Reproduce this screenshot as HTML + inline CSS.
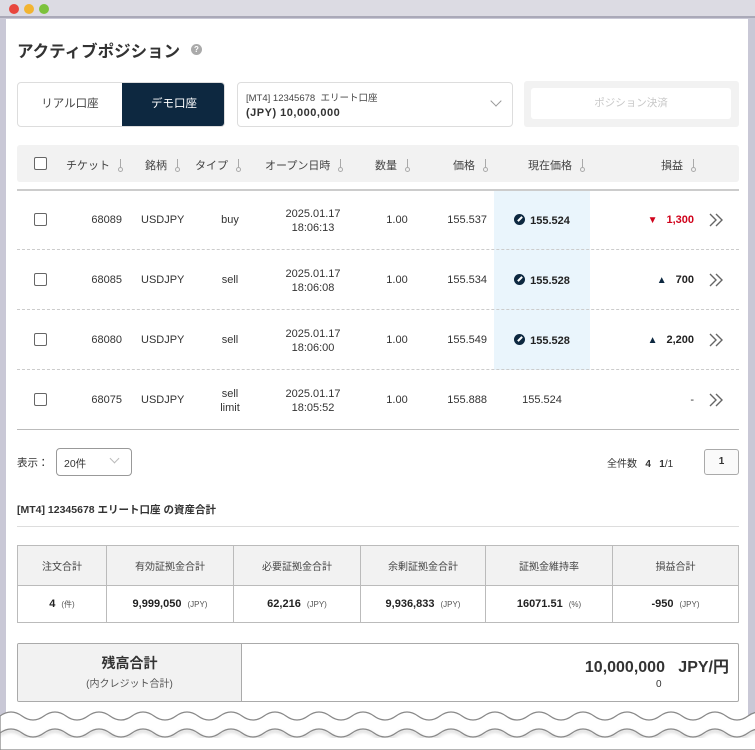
<!DOCTYPE html>
<html><head><meta charset="utf-8"><style>
*{box-sizing:border-box;margin:0;padding:0}
body{width:755px;height:750px;background:#fff;font-family:"Liberation Sans","Noto Sans CJK JP",sans-serif;color:#333;position:relative;overflow:hidden;font-size:11px}
.a{position:absolute}
.frame{left:0;top:0;width:755px;height:720px;background:#c9c8d6}
.top{left:0;top:0;width:755px;height:18px;background:#dcdbe3;border-bottom:2px solid #aaa9b8}
.dot{width:10px;height:10px;border-radius:50%;top:4px}
.page{left:6px;top:19px;width:742px;height:720px;background:#fff}
.c{text-align:center}
.r{text-align:right}
.cb{width:13px;height:13px;border:1px solid #666;border-radius:2px;background:#fff}
.sort{display:inline-block;width:5px;height:12px;position:relative;margin-left:8px;vertical-align:-2px}
.sort:before{content:"";position:absolute;left:2px;top:0;width:1px;height:9px;background:#aaa}
.sort:after{content:"";position:absolute;left:0;top:8px;width:3px;height:3px;border:1px solid #aaa;border-radius:50%}
.row{left:17px;width:722px;height:60px;border-bottom:1px dashed #ccc}
.ico{display:inline-block;width:11px;height:11px;border-radius:50%;background:#0d2840;vertical-align:-1px;margin-right:5px;position:relative}
.ico:after{content:"";position:absolute;left:3px;top:4px;width:6px;height:2px;background:#fff;transform:rotate(-45deg)}
.tri{font-size:10px;margin-right:9px}
table{border-collapse:collapse}
.sum td{border:1px solid #bbb;text-align:center;font-size:10px}
.sum tr:first-child td{background:#f2f2f2;height:40px;color:#444}
.sum tr:last-child td{height:37px}
.sum b{font-size:11px;color:#222;margin-right:6px}
.sum small{font-size:8px;color:#555}
</style></head><body>
<div class="a frame"></div>
<div class="a top"></div>
<div class="a dot" style="left:9px;background:#e8463e"></div>
<div class="a dot" style="left:24px;background:#f2b431"></div>
<div class="a dot" style="left:39px;background:#7cc23c"></div>
<div class="a page"></div>

<div class="a" style="left:17px;top:38px;font-size:16.5px;font-weight:bold;color:#333">アクティブポジション</div>
<div class="a" style="left:191px;top:44px;width:11px;height:11px;border-radius:50%;background:#aaa;color:#fff;font-size:8px;font-weight:bold;text-align:center;line-height:11px">?</div>

<div class="a" style="left:17px;top:82px;width:208px;height:45px;border:1px solid #ddd;border-radius:4px;overflow:hidden">
 <div class="a c" style="left:0;top:0;width:104px;height:43px;line-height:43px;font-size:11.5px;color:#444">リアル口座</div>
 <div class="a c" style="left:104px;top:0;width:104px;height:43px;line-height:43px;font-size:11.5px;color:#fff;background:#0d2840">デモ口座</div>
</div>
<div class="a" style="left:237px;top:82px;width:276px;height:45px;border:1px solid #ddd;border-radius:4px">
 <div class="a" style="left:8px;top:7px;font-size:9.5px;color:#444">[MT4] 12345678&nbsp; エリート口座</div>
 <div class="a" style="left:8px;top:24px;font-size:11px;font-weight:bold;color:#333;letter-spacing:.5px">(JPY) 10,000,000</div>
 <div class="a" style="left:254px;top:14px;width:8px;height:8px;border-right:1px solid #999;border-bottom:1px solid #999;transform:rotate(45deg)"></div>
</div>
<div class="a" style="left:524px;top:81px;width:215px;height:46px;background:#f2f2f2;border-radius:3px"></div>
<div class="a c" style="left:531px;top:88px;width:200px;height:31px;background:#fff;border-radius:3px;line-height:31px;color:#c8c8c8;font-size:10.5px">ポジション決済</div>

<div class="a" style="left:17px;top:145px;width:722px;height:37px;background:#f2f2f2;border-radius:3px"></div>
<div class="a" style="left:17px;top:189px;width:722px;height:2px;background:#ccc"></div>
<div class="a cb" style="left:34px;top:157px"></div>
<div class="a" style="left:66px;top:157px;color:#444">チケット<span class="sort"></span></div>
<div class="a" style="left:145px;top:157px;color:#444">銘柄<span class="sort"></span></div>
<div class="a" style="left:195px;top:157px;color:#444">タイプ<span class="sort"></span></div>
<div class="a" style="left:265px;top:157px;color:#444">オープン日時<span class="sort"></span></div>
<div class="a" style="left:375px;top:157px;color:#444">数量<span class="sort"></span></div>
<div class="a" style="left:453px;top:157px;color:#444">価格<span class="sort"></span></div>
<div class="a" style="left:528px;top:157px;color:#444">現在価格<span class="sort"></span></div>
<div class="a" style="left:661px;top:157px;color:#444">損益<span class="sort"></span></div>

<div class="a" style="left:494px;top:191px;width:96px;height:179px;background:#eaf5fc"></div>

<div class="a row" style="top:190px"></div>
<div class="a row" style="top:250px"></div>
<div class="a row" style="top:310px"></div>
<div class="a row" style="top:370px;border-bottom:1px solid #bbb"></div>

<div class="a cb" style="left:34px;top:213px"></div>
<div class="a r" style="left:72px;width:50px;top:214px">68089</div>
<div class="a" style="left:141px;top:214px">USDJPY</div>
<div class="a c" style="left:205px;width:50px;top:214px">buy</div>
<div class="a c" style="left:273px;width:80px;top:207px;line-height:14px">2025.01.17<br>18:06:13</div>
<div class="a c" style="left:377px;width:40px;top:214px">1.00</div>
<div class="a r" style="left:420px;width:67px;top:214px">155.537</div>
<div class="a c" style="left:494px;width:96px;top:214px;font-weight:bold;color:#222"><span class="ico"></span>155.524</div>
<div class="a r" style="left:620px;width:74px;top:214px;font-weight:bold;color:#d0021b"><span class="tri">▼</span>1,300</div>

<div class="a cb" style="left:34px;top:273px"></div>
<div class="a r" style="left:72px;width:50px;top:274px">68085</div>
<div class="a" style="left:141px;top:274px">USDJPY</div>
<div class="a c" style="left:205px;width:50px;top:274px">sell</div>
<div class="a c" style="left:273px;width:80px;top:267px;line-height:14px">2025.01.17<br>18:06:08</div>
<div class="a c" style="left:377px;width:40px;top:274px">1.00</div>
<div class="a r" style="left:420px;width:67px;top:274px">155.534</div>
<div class="a c" style="left:494px;width:96px;top:274px;font-weight:bold;color:#222"><span class="ico"></span>155.528</div>
<div class="a r" style="left:620px;width:74px;top:274px;font-weight:bold;color:#222"><span class="tri" style="color:#0d2840">▲</span>700</div>

<div class="a cb" style="left:34px;top:333px"></div>
<div class="a r" style="left:72px;width:50px;top:334px">68080</div>
<div class="a" style="left:141px;top:334px">USDJPY</div>
<div class="a c" style="left:205px;width:50px;top:334px">sell</div>
<div class="a c" style="left:273px;width:80px;top:327px;line-height:14px">2025.01.17<br>18:06:00</div>
<div class="a c" style="left:377px;width:40px;top:334px">1.00</div>
<div class="a r" style="left:420px;width:67px;top:334px">155.549</div>
<div class="a c" style="left:494px;width:96px;top:334px;font-weight:bold;color:#222"><span class="ico"></span>155.528</div>
<div class="a r" style="left:620px;width:74px;top:334px;font-weight:bold;color:#222"><span class="tri" style="color:#0d2840">▲</span>2,200</div>

<div class="a cb" style="left:34px;top:393px"></div>
<div class="a r" style="left:72px;width:50px;top:394px">68075</div>
<div class="a" style="left:141px;top:394px">USDJPY</div>
<div class="a c" style="left:205px;width:50px;top:387px;line-height:14px">sell<br>limit</div>
<div class="a c" style="left:273px;width:80px;top:387px;line-height:14px">2025.01.17<br>18:05:52</div>
<div class="a c" style="left:377px;width:40px;top:394px">1.00</div>
<div class="a r" style="left:420px;width:67px;top:394px">155.888</div>
<div class="a c" style="left:494px;width:96px;top:394px">155.524</div>
<div class="a r" style="left:620px;width:74px;top:394px">-</div>

<svg class="a" style="left:709px;top:213px" width="16" height="242" viewBox="0 0 16 242" fill="none" stroke="#666" stroke-width="1.4">
 <path d="M1 1 L7 7 L1 13 M7 1 L13 7 L7 13"/>
 <path d="M1 61 L7 67 L1 73 M7 61 L13 67 L7 73"/>
 <path d="M1 121 L7 127 L1 133 M7 121 L13 127 L7 133"/>
 <path d="M1 181 L7 187 L1 193 M7 181 L13 187 L7 193"/>
</svg>

<div class="a" style="left:17px;top:455px;font-size:10.5px">表示：</div>
<div class="a" style="left:56px;top:448px;width:76px;height:28px;border:1px solid #999;border-radius:4px">
 <div class="a" style="left:7px;top:7px;font-size:10.5px">20件</div>
 <div class="a" style="left:54px;top:6px;width:7px;height:7px;border-right:1px solid #bbb;border-bottom:1px solid #bbb;transform:rotate(45deg)"></div>
</div>
<div class="a" style="left:607px;top:455px;font-size:10px">全件数 &nbsp; <b>4</b> &nbsp; <b>1</b>/1</div>
<div class="a c" style="left:704px;top:449px;width:35px;height:26px;border:1px solid #aaa;border-radius:3px;background:#fafafa;line-height:24px;font-weight:bold;font-size:10px">1</div>

<div class="a" style="left:17px;top:502px;font-size:10.5px;font-weight:bold;color:#333">[MT4] 12345678 エリート口座 の資産合計</div>
<div class="a" style="left:17px;top:526px;width:722px;height:1px;background:#ddd"></div>

<table class="a sum" style="left:17px;top:545px;width:722px">
<tr><td style="width:89px">注文合計</td><td style="width:127px">有効証拠金合計</td><td style="width:127px">必要証拠金合計</td><td style="width:125px">余剰証拠金合計</td><td style="width:127px">証拠金維持率</td><td>損益合計</td></tr>
<tr><td><b>4</b><small>(件)</small></td><td><b>9,999,050</b><small>(JPY)</small></td><td><b>62,216</b><small>(JPY)</small></td><td><b>9,936,833</b><small>(JPY)</small></td><td><b>16071.51</b><small>(%)</small></td><td><b>-950</b><small>(JPY)</small></td></tr>
</table>

<div class="a" style="left:17px;top:643px;width:722px;height:59px;border:1px solid #aaa;border-radius:2px;overflow:hidden">
 <div class="a c" style="left:0;top:0;width:224px;height:57px;background:#f2f2f2;border-right:1px solid #aaa">
  <div style="margin-top:9px;font-size:14px;font-weight:bold">残高合計</div>
  <div style="font-size:10px;color:#555;margin-top:2px">(内クレジット合計)</div>
 </div>
 <div class="a r" style="right:9px;top:9px;font-size:16px;font-weight:bold;color:#333">10,000,000 &nbsp;&nbsp;JPY/円</div>
 <div class="a" style="left:638px;top:35px;font-size:10px">0</div>
</div>

<svg class="a" style="left:0;top:706px" width="755" height="44" viewBox="0 0 755 44">
 <defs><filter id="s"><feDropShadow dx="0" dy="2" stdDeviation="1.5" flood-color="#777" flood-opacity=".6"/></filter></defs>
 <path d="M0 10 Q11 2 22 10 T44 10 T66 10 T88 10 T110 10 T132 10 T154 10 T176 10 T198 10 T220 10 T242 10 T264 10 T286 10 T308 10 T330 10 T352 10 T374 10 T396 10 T418 10 T440 10 T462 10 T484 10 T506 10 T528 10 T550 10 T572 10 T594 10 T616 10 T638 10 T660 10 T682 10 T704 10 T726 10 T748 10 T770 10 L770 44 L0 44 Z" fill="#fff" stroke="#888" stroke-width="1.3"/>
 <path d="M0 27 Q11 19 22 27 T44 27 T66 27 T88 27 T110 27 T132 27 T154 27 T176 27 T198 27 T220 27 T242 27 T264 27 T286 27 T308 27 T330 27 T352 27 T374 27 T396 27 T418 27 T440 27 T462 27 T484 27 T506 27 T528 27 T550 27 T572 27 T594 27 T616 27 T638 27 T660 27 T682 27 T704 27 T726 27 T748 27 T770 27" fill="none" stroke="#888" stroke-width="1.3" filter="url(#s)"/>
</svg>
</body></html>
